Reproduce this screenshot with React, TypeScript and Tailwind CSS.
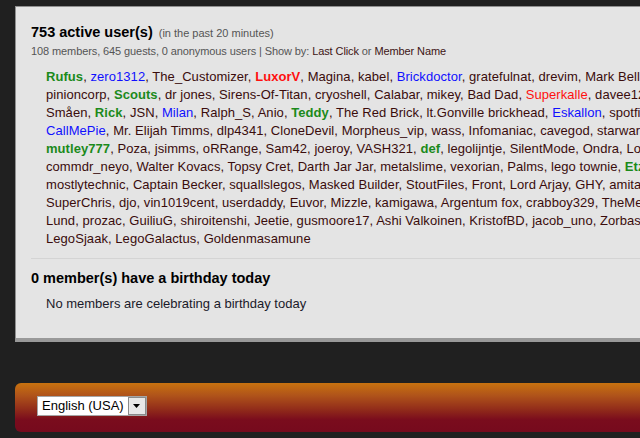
type Name = { n: string; c?: "g" | "b" | "r" | "rb" };

const lines: Name[][] = [
  [{ n: "Rufus", c: "g" }, { n: "zero1312", c: "b" }, { n: "The_Customizer" }, { n: "LuxorV", c: "rb" }, { n: "Magina" }, { n: "kabel" }, { n: "Brickdoctor", c: "b" }, { n: "gratefulnat" }, { n: "drevim" }, { n: "Mark Bellis" }],
  [{ n: "pinioncorp" }, { n: "Scouts", c: "g" }, { n: "dr jones" }, { n: "Sirens-Of-Titan" }, { n: "cryoshell" }, { n: "Calabar" }, { n: "mikey" }, { n: "Bad Dad" }, { n: "Superkalle", c: "r" }, { n: "davee123" }],
  [{ n: "Småen" }, { n: "Rick", c: "g" }, { n: "JSN" }, { n: "Milan", c: "b" }, { n: "Ralph_S" }, { n: "Anio" }, { n: "Teddy", c: "g" }, { n: "The Red Brick" }, { n: "lt.Gonville brickhead" }, { n: "Eskallon", c: "b" }, { n: "spotfire" }],
  [{ n: "CallMePie", c: "b" }, { n: "Mr. Elijah Timms" }, { n: "dlp4341" }, { n: "CloneDevil" }, { n: "Morpheus_vip" }, { n: "wass" }, { n: "Infomaniac" }, { n: "cavegod" }, { n: "starwarsguy" }],
  [{ n: "mutley777", c: "g" }, { n: "Poza" }, { n: "jsimms" }, { n: "oRRange" }, { n: "Sam42" }, { n: "joeroy" }, { n: "VASH321" }, { n: "def", c: "g" }, { n: "legolijntje" }, { n: "SilentMode" }, { n: "Ondra" }, { n: "Lord" }],
  [{ n: "commdr_neyo" }, { n: "Walter Kovacs" }, { n: "Topsy Cret" }, { n: "Darth Jar Jar" }, { n: "metalslime" }, { n: "vexorian" }, { n: "Palms" }, { n: "lego townie" }, { n: "Etzel", c: "g" }],
  [{ n: "mostlytechnic" }, { n: "Captain Becker" }, { n: "squallslegos" }, { n: "Masked Builder" }, { n: "StoutFiles" }, { n: "Front" }, { n: "Lord Arjay" }, { n: "GHY" }, { n: "amitaro" }],
  [{ n: "SuperChris" }, { n: "djo" }, { n: "vin1019cent" }, { n: "userdaddy" }, { n: "Euvor" }, { n: "Mizzle" }, { n: "kamigawa" }, { n: "Argentum fox" }, { n: "crabboy329" }, { n: "TheMegaBrick" }],
  [{ n: "Lund" }, { n: "prozac" }, { n: "GuiliuG" }, { n: "shiroitenshi" }, { n: "Jeetie" }, { n: "gusmoore17" }, { n: "Ashi Valkoinen" }, { n: "KristofBD" }, { n: "jacob_uno" }, { n: "Zorbas" }],
  [{ n: "LegoSjaak" }, { n: "LegoGalactus" }, { n: "Goldenmasamune" }],
];

function UserName({ u }: { u: Name }) {
  if (u.c === "g") return <span className="font-bold text-[#1b8a1b]">{u.n}</span>;
  if (u.c === "b") return <span className="text-[#1010ff]">{u.n}</span>;
  if (u.c === "rb") return <span className="font-bold text-[#ff1010]">{u.n}</span>;
  if (u.c === "r") return <span className="text-[#ff1010]">{u.n}</span>;
  return <span>{u.n}</span>;
}

export default function App() {
  return (
    <div className="w-[640px] h-[438px] overflow-hidden bg-[#202020] pl-[15px] pt-[6px] font-['Liberation_Sans',Arial,sans-serif]">
      {/* PANEL */}
      <div className="w-[760px] bg-[#e4e4e4] border-l border-t border-[#8f8f8f] border-b-4 border-b-[#999999] pl-[15px] pt-[16px] pb-[25px]">
        <div className="flex items-baseline gap-[6px] h-[18px] leading-[18px]">
          <span className="text-[14.5px] font-bold text-black">753 active user(s)</span>
          <span className="text-[11px] text-[#555555]">(in the past 20 minutes)</span>
        </div>
        <div className="mt-[3px] h-[14px] leading-[14px] text-[11px] tracking-[-0.1px] text-[#555555] whitespace-nowrap">
          108 members, 645 guests, 0 anonymous users | Show by:{" "}
          <span className="text-[#3d1414]">Last Click</span> or{" "}
          <span className="text-[#3d1414]">Member Name</span>
        </div>

        {/* NAMES */}
        <div className="mt-[10px] pl-[15px] text-[13px] leading-[18px] tracking-[0.06px] text-[#3a0c0c]">
          {lines.map((line, i) => (
            <div key={i} className="whitespace-nowrap h-[18px]">
              {line.map((u, j) => (
                <span key={j}>
                  <UserName u={u} />
                  {i === lines.length - 1 && j === line.length - 1 ? "" : ", "}
                </span>
              ))}
            </div>
          ))}
        </div>

        <div className="mt-[10px] h-px bg-[#d4d4d4]" />

        <div className="mt-[10px] text-[14.5px] font-bold leading-[18px] text-black">
          0 member(s) have a birthday today
        </div>
        <div className="mt-[8px] pl-[15px] text-[13px] leading-[18px] text-[#1a1a2a]">
          No members are celebrating a birthday today
        </div>
      </div>

      {/* FOOTER */}
      <div className="mt-[41px] w-[700px] h-[49px] rounded-l-[6px] bg-[linear-gradient(to_bottom,#c8720f_0%,#b0541a_25%,#902a1a_55%,#7a0c1d_75%,#760a1d_100%)] pl-[22px] pt-[13px]">
        <div className="flex w-[110px] h-[20px] bg-white border border-[#a5a5a5]">
          <div className="flex-1 pl-[4px] text-[13px] leading-[18px] text-black whitespace-nowrap">
            English (USA)
          </div>
          <div className="w-[18px] h-[18px] bg-[#e8e8e8] border border-[#8a8a8a] flex items-center justify-center">
            <svg width="8" height="4" viewBox="0 0 8 4">
              <path d="M0 0h7L3.5 4z" fill="#000" />
            </svg>
          </div>
        </div>
      </div>
    </div>
  );
}
